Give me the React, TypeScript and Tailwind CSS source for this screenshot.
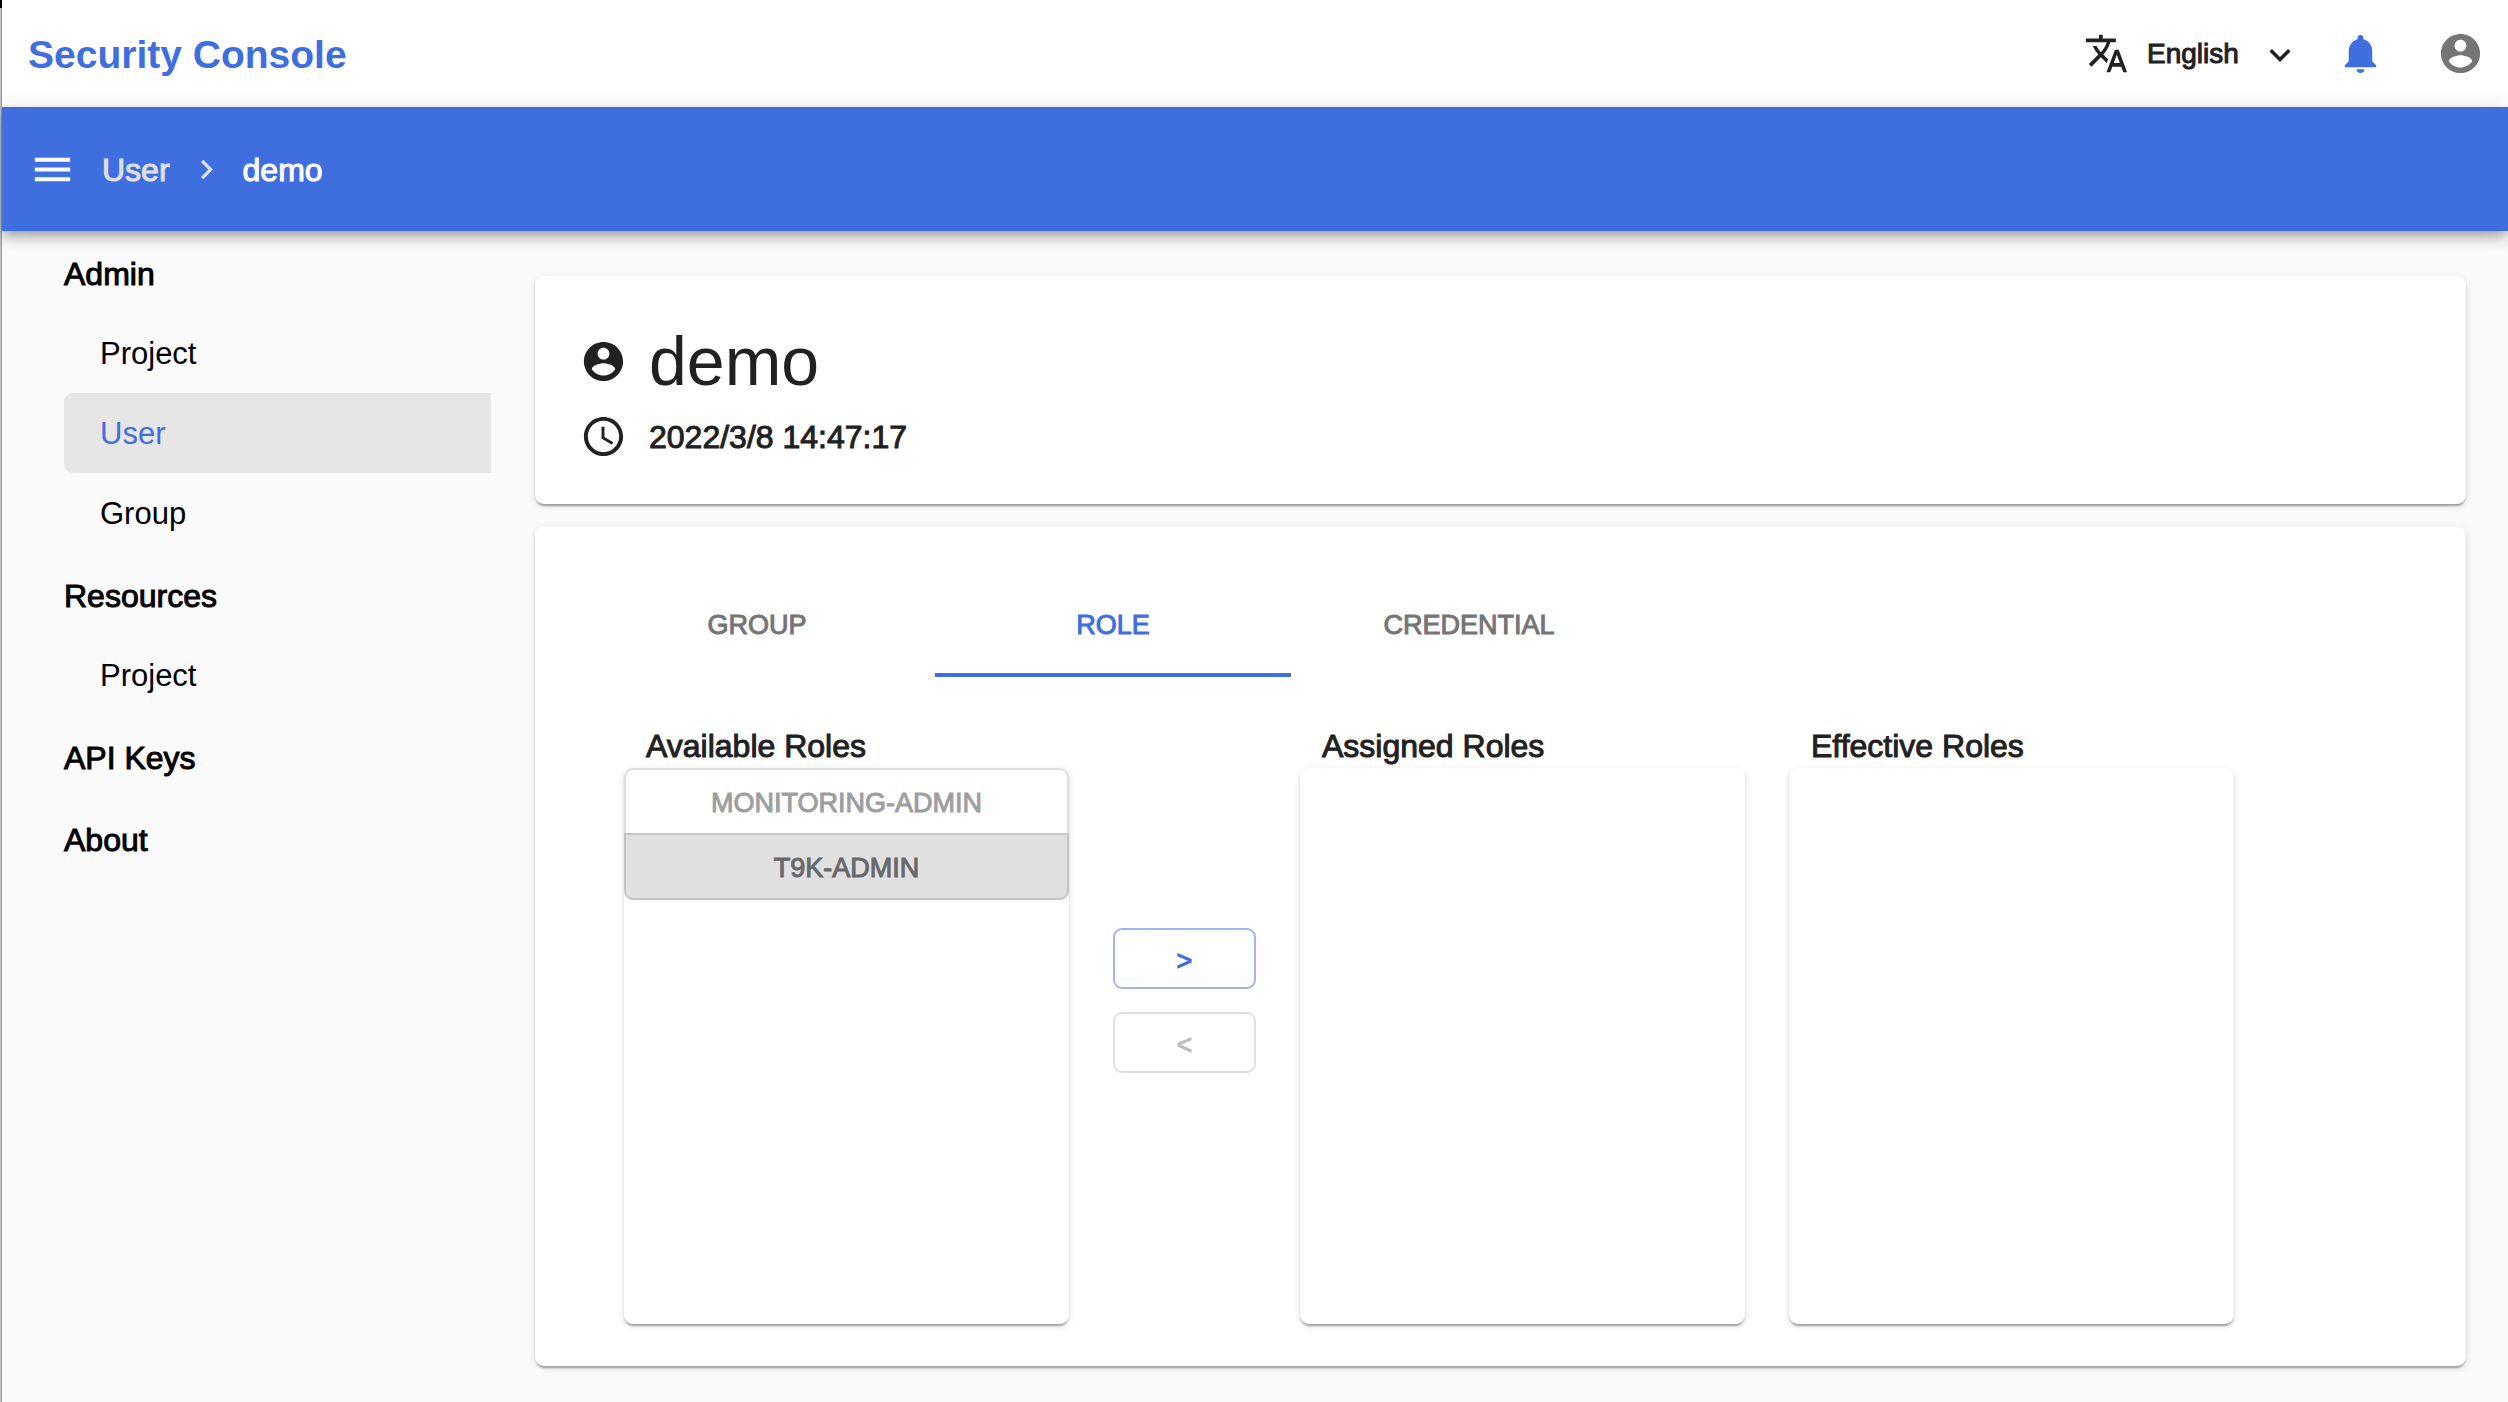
import { useState } from "react";
import type { ReactNode } from "react";

const medium = "[-webkit-text-stroke:1px_currentColor]";
const cardShadow =
  "shadow-[0_4px_2px_-2px_rgba(0,0,0,0.2),0_2px_2px_0_rgba(0,0,0,0.14),0_2px_7px_0_rgba(0,0,0,0.12)]";

function Icon({ className, children }: { className: string; children: ReactNode }) {
  return (
    <svg viewBox="0 0 24 24" fill="currentColor" aria-hidden="true" className={`shrink-0 ${className}`}>
      {children}
    </svg>
  );
}

function AccountCircle({ className }: { className: string }) {
  return (
    <Icon className={className}>
      <path d="M12 2C6.48 2 2 6.48 2 12s4.48 10 10 10 10-4.48 10-10S17.52 2 12 2zm0 3c1.66 0 3 1.34 3 3s-1.34 3-3 3-3-1.34-3-3 1.34-3 3-3zm0 14.2c-2.5 0-4.71-1.28-6-3.22.03-1.99 4-3.08 6-3.08 1.99 0 5.97 1.09 6 3.08-1.29 1.94-3.5 3.22-6 3.22z" />
    </Icon>
  );
}

function TopBar() {
  return (
    <header className="flex h-[107px] items-center justify-between bg-white pl-[26px] pr-6">
      <h1 className="pt-0.5 text-[39px] leading-none font-bold text-[#3f6fde]">Security Console</h1>
      <div className="flex items-center">
        <Icon className="mr-[18px] size-[45px] text-[#212121]">
          <path d="M12.87 15.07l-2.54-2.51.03-.03c1.74-1.94 2.98-4.17 3.71-6.53H17V4h-7V2H8v2H1v1.99h11.17C11.5 7.92 10.44 9.75 9 11.35 8.07 10.32 7.3 9.19 6.69 8h-2c.73 1.63 1.73 3.17 2.98 4.56l-5.09 5.02L4 19l5-5 3.11 3.11.76-2.04zM18.5 10h-2L12 22h2l1.12-3h4.75L21 22h2l-4.5-12zm-2.62 7l1.62-4.33L19.12 17h-3.24z" />
        </Icon>
        <div className="relative mr-9 w-[154px]">
          <select
            aria-label="Language"
            className={`w-full cursor-pointer appearance-none bg-transparent text-[28px] leading-10 text-[#212121] ${medium}`}
          >
            <option>English</option>
          </select>
          <Icon className="pointer-events-none absolute top-0 right-0 size-[42px] text-[#212121]">
            <path d="M16.59 8.59L12 13.17 7.41 8.59 6 10l6 6 6-6z" />
          </Icon>
        </div>
        <button type="button" aria-label="Notifications" className="mr-[53px] text-[#3f6fde]">
          <Icon className="size-[47px]">
            <path d="M12 22c1.1 0 2-.9 2-2h-4c0 1.1.89 2 2 2zm6-6v-5c0-3.07-1.64-5.64-4.5-6.32V4c0-.83-.67-1.5-1.5-1.5s-1.5.67-1.5 1.5v.68C7.63 5.36 6 7.92 6 11v5l-2 2v1h16v-1l-2-2z" />
          </Icon>
        </button>
        <button type="button" aria-label="Account" className="text-[#757575]">
          <AccountCircle className="size-[47px]" />
        </button>
      </div>
    </header>
  );
}

function AppBar() {
  return (
    <div className="relative z-10 flex h-[124px] items-center bg-[#3f6fde] pl-[27px] text-[32px] text-white shadow-[0_4px_9px_-2px_rgba(0,0,0,0.2),0_9px_11px_0_rgba(0,0,0,0.14),0_2px_22px_0_rgba(0,0,0,0.12)]">
      <button type="button" aria-label="Toggle menu" className="mr-[26px]">
        <Icon className="size-[47px]">
          <path d="M3 18h18v-2H3v2zm0-5h18v-2H3v2zm0-7v2h18V6H3z" />
        </Icon>
      </button>
      <nav aria-label="Breadcrumb" className={`flex items-center ${medium}`}>
        <a href="#user" className="pt-0.5 text-[#e0e0e0]">User</a>
        <Icon className="mx-[17px] size-[39px] text-[#e0e0e0]">
          <path d="M10 6L8.59 7.41 13.17 12l-4.58 4.59L10 18l6-6z" />
        </Icon>
        <span aria-current="page" className="pt-0.5">demo</span>
      </nav>
    </div>
  );
}

function NavHeading({ children }: { children: ReactNode }) {
  return <div className={`flex h-[82px] items-center pt-1 ${medium}`}>{children}</div>;
}

function NavItem({ href, active = false, children }: { href: string; active?: boolean; children: ReactNode }) {
  return (
    <a
      href={href}
      aria-current={active ? "page" : undefined}
      className={`flex h-20 items-center rounded-l-[9px] pt-0.5 pl-9 text-[31px] ${active ? "bg-[#e6e6e6] text-[#3f6fde]" : ""}`}
    >
      {children}
    </a>
  );
}

function Sidebar() {
  return (
    <nav aria-label="Main" className="w-[489px] shrink-0 pl-[62px] text-[32px] text-black">
      <NavHeading>Admin</NavHeading>
      <NavItem href="#projects">Project</NavItem>
      <NavItem href="#users" active>User</NavItem>
      <NavItem href="#groups">Group</NavItem>
      <NavHeading>Resources</NavHeading>
      <NavItem href="#resource-projects">Project</NavItem>
      <NavHeading><a href="#api-keys">API Keys</a></NavHeading>
      <NavHeading><a href="#about">About</a></NavHeading>
    </nav>
  );
}

function RoleList({ title, children }: { title: string; children?: ReactNode }) {
  return (
    <section className="w-[445px]">
      <h3 className={`pl-[22px] text-[32px] leading-[44px] ${medium}`}>{title}</h3>
      <div className={`flex h-[556px] flex-col rounded-[9px] bg-white ${cardShadow}`}>{children}</div>
    </section>
  );
}

const tabs = ["GROUP", "ROLE", "CREDENTIAL"];

export default function App() {
  const [tab, setTab] = useState("ROLE");

  return (
    <div className="flex min-h-screen bg-[#fafafa] font-['Liberation_Sans',Arial,sans-serif] text-[#212121]">
      <div className="flex w-0.5 shrink-0 flex-col">
        <div className="h-2 bg-black" />
        <div className="grow border-r border-[#9c9c9c] bg-[#c2c2c2]" />
      </div>
      <div className="min-w-0 grow">
        <TopBar />
        <AppBar />
        <div className="flex">
          <Sidebar />
          <main className="flex min-w-0 grow flex-col gap-[22px] pt-[45px] pr-[42px] pb-9 pl-11">
            <section className={`rounded-[9px] bg-white px-[45px] pt-[45px] pb-[33px] ${cardShadow}`}>
              <div className="flex h-20 items-center gap-[22px]">
                <AccountCircle className="size-[47px]" />
                <h2 className="text-[68px] leading-[80px]">demo</h2>
              </div>
              <div className={`flex h-[70px] items-center gap-[22px] text-[32px] ${medium}`}>
                <Icon className="size-[47px]">
                  <path d="M11.99 2C6.47 2 2 6.48 2 12s4.47 10 9.99 10C17.52 22 22 17.52 22 12S17.52 2 11.99 2zM12 20c-4.42 0-8-3.58-8-8s3.58-8 8-8 8 3.58 8 8-3.58 8-8 8z" />
                  <path d="M12.5 7H11v6l5.25 3.15.75-1.23-4.5-2.67z" />
                </Icon>
                <time dateTime="2022-03-08T14:47:17" className="pt-0.5">2022/3/8 14:47:17</time>
              </div>
            </section>
            <section className={`rounded-[9px] bg-white px-11 pt-11 pb-[42px] ${cardShadow}`}>
              <div role="tablist" className={`flex text-[27px] ${medium}`}>
                {tabs.map((name) => (
                  <button
                    key={name}
                    type="button"
                    role="tab"
                    aria-selected={tab === name}
                    onClick={() => setTab(name)}
                    className={`h-[107px] w-[356px] border-b-4 pt-2 ${
                      tab === name ? "border-b-[#3f6fde] text-[#3f6fde]" : "border-b-transparent text-[#757575]"
                    }`}
                  >
                    {name}
                  </button>
                ))}
              </div>
              <div className="flex items-center gap-11 pt-[47px] pl-[45px]">
                <RoleList title="Available Roles">
                  <button
                    type="button"
                    className={`h-[67px] rounded-t-[9px] border-2 border-[#dedede] pt-1 text-[27px] text-[#9e9e9e] ${medium}`}
                  >
                    MONITORING-ADMIN
                  </button>
                  <button
                    type="button"
                    aria-pressed="true"
                    className={`-mt-0.5 h-[67px] rounded-b-[9px] border-2 border-[#c4c4c4] bg-[#e0e0e0] pt-1 text-[27px] text-[#686868] ${medium}`}
                  >
                    T9K-ADMIN
                  </button>
                </RoleList>
                <div className={`flex w-[143px] flex-col gap-[23px] pb-12 text-[27px] ${medium}`}>
                  <button
                    type="button"
                    aria-label="Assign selected roles"
                    className="h-[61px] rounded-[9px] border-2 border-[#9fb7ee] pt-1.5 text-[#3f6fde]"
                  >
                    &gt;
                  </button>
                  <button
                    type="button"
                    disabled
                    aria-label="Remove selected roles"
                    className="h-[61px] rounded-[9px] border-2 border-[#e0e0e0] pt-1.5 text-[#bdbdbd]"
                  >
                    &lt;
                  </button>
                </div>
                <RoleList title="Assigned Roles" />
                <RoleList title="Effective Roles" />
              </div>
            </section>
          </main>
        </div>
      </div>
    </div>
  );
}
